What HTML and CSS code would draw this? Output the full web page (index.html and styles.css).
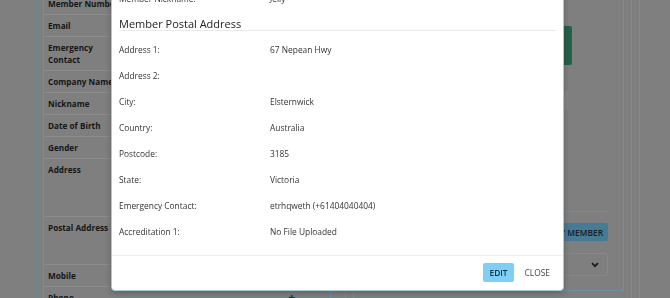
FILE: index.html
```html
<!DOCTYPE html>
<html lang="en">
<head>
  <meta charset="UTF-8" />
  <meta name="viewport" content="width=device-width, initial-scale=1.0"/>
  <title>Member Details</title>
  <link rel="stylesheet" href="styles.css">
</head>
<body>
  <!-- Page behind the dialog (dimmed by the backdrop) -->
  <div class="page">
    <div class="rail"></div>

    <div class="details">
      <div class="detail-row"><div class="detail-label">Member Number</div><div class="detail-value"></div></div>
      <div class="detail-row"><div class="detail-label">Email</div><div class="detail-value"></div></div>
      <div class="detail-row"><div class="detail-label">Emergency<br>Contact</div><div class="detail-value"></div></div>
      <div class="detail-row"><div class="detail-label">Company Name</div><div class="detail-value"></div></div>
      <div class="detail-row"><div class="detail-label">Nickname</div><div class="detail-value"></div></div>
      <div class="detail-row"><div class="detail-label">Date of Birth</div><div class="detail-value"></div></div>
      <div class="detail-row"><div class="detail-label">Gender</div><div class="detail-value"></div></div>
      <div class="detail-row lines-4"><div class="detail-label">Address</div><div class="detail-value"></div></div>
      <div class="detail-row lines-3"><div class="detail-label">Postal Address</div><div class="detail-value"></div></div>
      <div class="detail-row"><div class="detail-label">Mobile</div><div class="detail-value"></div></div>
      <div class="detail-row"><div class="detail-label">Phone</div><div class="detail-value"><span class="add-phone">+</span></div></div>
    </div>

    <div class="side">
      <div class="side-card">
        <div class="side-panel">
          <button class="btn-save"></button>
          <button class="btn-light"></button>
          <hr class="side-rule">
          <div class="side-actions">
            <button class="btn-member">ADD FAMILY MEMBER</button>
          </div>
          <div class="side-select">
            <span class="chevron">
              <svg width="8" height="6" viewBox="0 0 8 6"><path d="M1 1.2 L4 4.2 L7 1.2" fill="none" stroke="#1b1b1b" stroke-width="1.8"/></svg>
            </span>
          </div>
        </div>
      </div>
    </div>
  </div>

  <!-- Member dialog -->
  <div class="modal">
    <div class="modal-body">
      <div class="info-row"><span>Member Nickname:</span><span>Jelly</span></div>

      <h3 class="section-title">Member Postal Address</h3>
      <div class="info-row"><span>Address 1:</span><span>67 Nepean Hwy</span></div>
      <div class="info-row"><span>Address 2:</span><span></span></div>
      <div class="info-row"><span>City:</span><span>Elsternwick</span></div>
      <div class="info-row"><span>Country:</span><span>Australia</span></div>
      <div class="info-row"><span>Postcode:</span><span>3185</span></div>
      <div class="info-row"><span>State:</span><span>Victoria</span></div>
      <div class="info-row"><span>Emergency Contact:</span><span>etrhqweth (+61404040404)</span></div>
      <div class="info-row"><span>Accreditation 1:</span><span>No File Uploaded</span></div>
    </div>
    <div class="modal-footer">
      <button class="btn-edit">Edit</button>
      <button class="btn-close">Close</button>
    </div>
  </div>
</body>
</html>
```

FILE: styles.css
```css
/* Base */
body {
  margin: 0;
  font-family: "Open Sans", "Noto Sans", sans-serif;
  background-color: #7f7f7f;
  overflow: hidden;
}
button {
  font-family: inherit;
  border: none;
  cursor: pointer;
}

/* Dimmed page behind the dialog */
.page {
  display: flex;
  align-items: flex-start;
  height: 298px;
  overflow: hidden;
  background-color: #7f7f7f;
}
.rail {
  width: 36px;
  height: 298px;
  flex: none;
  border-right: 1px solid #6a8798;
}

/* Member details table */
.details {
  box-sizing: border-box;
  width: 288px;
  flex: none;
  margin: -7px 0 0 6px;
  border-left: 1px solid #6f8fa2;
  border-right: 1px solid #6f8fa2;
}
.detail-row {
  display: flex;
  border-bottom: 1px solid #8b8b8b;
  font-size: 8.2px;
  line-height: 12px;
}
.detail-row.lines-4 {
  min-height: 57px;
}
.detail-row.lines-3 {
  min-height: 47px;
}
.detail-label {
  width: 106px;
  padding: 4.5px 4px;
  font-weight: 700;
  color: #161616;
}
.detail-value {
  flex: 1;
  padding: 4.5px 35px 4.5px 4px;
  color: #222;
}
.add-phone {
  display: block;
  text-align: right;
  font-size: 12px;
  font-weight: 700;
  line-height: 12px;
  color: #1a2a36;
}

/* Right side panel */
.side {
  box-sizing: border-box;
  width: 295px;
  height: 298px;
  flex: none;
  margin-left: 14px;
  padding: 0 7px;
  border-left: 1px solid #6f8fa2;
  border-right: 1px solid #6f8fa2;
}
.side-card {
  height: 298px;
  border-left: 1px solid #6f8fa2;
  border-right: 1px solid #6f8fa2;
  padding-right: 7px;
}
.side-panel {
  display: flex;
  flex-direction: column;
  padding: 26px 15px 14px;
  border-right: 1px solid #6f8fa2;
  border-bottom: 1px solid #6f8fa2;
}
.btn-save {
  width: 203px;
  height: 39px;
  background-color: #24604a;
  border-radius: 2px;
}
.btn-light {
  width: 199px;
  height: 19px;
  margin-top: 26px;
  background-color: #858585;
}
.side-rule {
  width: 100%;
  margin: 101px 0 0;
  border: none;
  border-top: 1px solid #6f8fa2;
}
.side-actions {
  display: flex;
  justify-content: flex-end;
  margin-top: 11px;
}
.btn-member {
  height: 18px;
  padding: 0 5px 0 8px;
  background-color: #477a93;
  color: #142029;
  font-size: 8.4px;
  font-weight: 600;
  border-radius: 2px;
}
.side-select {
  display: flex;
  justify-content: flex-end;
  align-items: center;
  height: 21px;
  margin-top: 12px;
  padding-right: 8px;
  border: 1px solid #6f8fa2;
  border-radius: 2px;
}
.chevron {
  display: flex;
}

/* Dialog */
.modal {
  position: fixed;
  left: 111px;
  bottom: 7px;
  box-sizing: border-box;
  width: 453px;
  background-color: #fff;
  border: 1px solid #a3c9dd;
  border-radius: 4px;
  box-shadow: 0 2px 6px rgba(0, 0, 0, 0.25);
}
.modal-body {
  padding: 0 7px 11px;
}
.section-title {
  margin: 6px 0 5px;
  font-size: 11px;
  line-height: 13px;
  font-weight: 400;
  color: #222;
  border-bottom: 1px solid #ebebeb;
}
.info-row {
  display: grid;
  grid-template-columns: 151px 1fr;
  align-items: center;
  height: 26px;
  font-size: 8.4px;
  color: #333;
}
.modal-footer {
  display: flex;
  justify-content: flex-end;
  gap: 5px;
  padding: 7px 7px 8px;
  border-top: 1px solid #ececec;
}
.modal-footer button {
  height: 19px;
  padding: 0 6px;
  font-size: 8.4px;
  text-transform: uppercase;
  border-radius: 2px;
}
.btn-edit {
  background-color: #80cdf5;
  color: #163444;
  font-weight: 600;
}
.btn-close {
  background-color: transparent;
  color: #444;
}
```
